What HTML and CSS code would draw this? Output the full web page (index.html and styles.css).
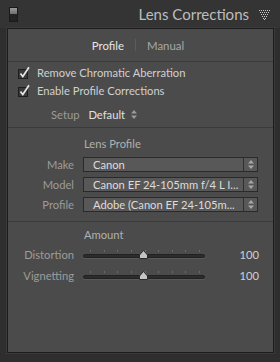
FILE: index.html
```html
<!DOCTYPE html>
<html lang="en">
<head>
    <meta charset="UTF-8">
    <meta name="viewport" content="width=device-width, initial-scale=1.0">
    <title>Lens Corrections</title>
    <link rel="stylesheet" href="styles.css">
</head>
<body>
    <div class="frame">
        <div class="header">
            <div class="toggle"><span class="toggle-on"></span></div>
            <h1 class="title">Lens Corrections</h1>
            <svg class="collapse" width="11" height="10" viewBox="0 0 11 10">
                <g fill="#c8c8c8">
                    <rect x="0" y="0" width="1" height="1"/><rect x="2" y="0" width="1" height="1"/><rect x="4" y="0" width="1" height="1"/><rect x="6" y="0" width="1" height="1"/><rect x="8" y="0" width="1" height="1"/><rect x="10" y="0" width="1" height="1"/>
                    <rect x="1" y="2" width="1" height="1"/><rect x="3" y="2" width="1" height="1"/><rect x="5" y="2" width="1" height="1"/><rect x="7" y="2" width="1" height="1"/><rect x="9" y="2" width="1" height="1"/>
                    <rect x="2" y="4" width="1" height="1"/><rect x="4" y="4" width="1" height="1"/><rect x="6" y="4" width="1" height="1"/><rect x="8" y="4" width="1" height="1"/>
                    <rect x="3" y="6" width="1" height="1"/><rect x="5" y="6" width="1" height="1"/><rect x="7" y="6" width="1" height="1"/>
                    <rect x="4" y="8" width="1" height="1"/><rect x="6" y="8" width="1" height="1"/>
                    <rect x="5" y="9" width="1" height="1"/>
                </g>
            </svg>
        </div>

        <div class="panel">
            <div class="tabs">
                <span class="tab active">Profile</span>
                <span class="tab-sep"></span>
                <span class="tab">Manual</span>
            </div>

            <div class="section checks">
                <label class="check">
                    <svg width="14" height="13" viewBox="0 0 14 13">
                        <rect x="0.5" y="3.5" width="9" height="9" fill="#3a3a3a" stroke="#1e1e1e"/>
                        <path d="M2.5 7.5 L4.8 10.5 L11 1.2" fill="none" stroke="#e6e6e6" stroke-width="1.7"/>
                    </svg>
                    <span>Remove Chromatic Aberration</span>
                </label>
                <label class="check">
                    <svg width="14" height="13" viewBox="0 0 14 13">
                        <rect x="0.5" y="3.5" width="9" height="9" fill="#3a3a3a" stroke="#1e1e1e"/>
                        <path d="M2.5 7.5 L4.8 10.5 L11 1.2" fill="none" stroke="#e6e6e6" stroke-width="1.7"/>
                    </svg>
                    <span>Enable Profile Corrections</span>
                </label>
                <div class="setup">
                    <span class="label">Setup</span>
                    <span class="value">Default</span>
                    <svg class="updown" width="6" height="9" viewBox="0 0 6 9">
                        <path d="M3 0 L6 3.5 H0 Z M3 9 L6 5.5 H0 Z" fill="#9a9a9a"/>
                    </svg>
                </div>
            </div>

            <div class="section profile">
                <div class="sub-title">Lens Profile</div>
                <div class="grid">
                    <span class="label">Make</span>
                    <div class="select"><span class="select-text">Canon</span><span class="select-btn"><svg width="6" height="9" viewBox="0 0 6 9"><path d="M3 0 L6 3.5 H0 Z M3 9 L6 5.5 H0 Z" fill="#a6a6a6"/></svg></span></div>
                    <span class="label">Model</span>
                    <div class="select"><span class="select-text">Canon EF 24-105mm f/4 L I...</span><span class="select-btn"><svg width="6" height="9" viewBox="0 0 6 9"><path d="M3 0 L6 3.5 H0 Z M3 9 L6 5.5 H0 Z" fill="#a6a6a6"/></svg></span></div>
                    <span class="label">Profile</span>
                    <div class="select"><span class="select-text">Adobe (Canon EF 24-105m...</span><span class="select-btn"><svg width="6" height="9" viewBox="0 0 6 9"><path d="M3 0 L6 3.5 H0 Z M3 9 L6 5.5 H0 Z" fill="#a6a6a6"/></svg></span></div>
                </div>
            </div>

            <div class="section amount">
                <div class="sub-title">Amount</div>
                <div class="grid sliders">
                    <span class="label">Distortion</span>
                    <div class="slider">
                        <div class="ticks"><i></i><i></i><i></i><i></i><i></i><i></i><i></i><i></i><i></i></div>
                        <div class="track"></div>
                        <svg class="thumb" width="9" height="9" viewBox="0 0 9 9"><path d="M4.5 0.5 L8.5 5 V8.5 H0.5 V5 Z" fill="#c4c4c4" stroke="#2a2a2a"/></svg>
                    </div>
                    <span class="num">100</span>
                    <span class="label">Vignetting</span>
                    <div class="slider">
                        <div class="ticks"><i></i><i></i><i></i><i></i><i></i><i></i><i></i><i></i><i></i></div>
                        <div class="track"></div>
                        <svg class="thumb" width="9" height="9" viewBox="0 0 9 9"><path d="M4.5 0.5 L8.5 5 V8.5 H0.5 V5 Z" fill="#c4c4c4" stroke="#2a2a2a"/></svg>
                    </div>
                    <span class="num">100</span>
                </div>
            </div>
        </div>
    </div>
</body>
</html>
```

FILE: styles.css
```css
* {
    margin: 0;
    padding: 0;
    box-sizing: border-box;
}

body {
    background-color: #2e2e2e;
    font-family: Lato, "Open Sans", sans-serif;
    font-size: 11.2px;
    color: #c8c8c8;
}

.frame {
    width: 280px;
    height: 362px;
    padding: 0 6px 9px 7px;
    display: flex;
    flex-direction: column;
}

/* Header */
.header {
    height: 28px;
    display: flex;
    align-items: center;
    background-color: #343434;
    margin: 0 -6px 0 -7px;
    padding: 0 10px 0 9px;
}

.toggle {
    width: 9px;
    height: 15px;
    background-color: #232323;
    border: 1px solid #1a1a1a;
    display: flex;
    flex-direction: column;
}

.toggle-on {
    height: 6px;
    background: linear-gradient(#9a9a9a, #6e6e6e);
}

.title {
    flex: 1;
    text-align: right;
    font-size: 15px;
    font-weight: normal;
    color: #bdbdbd;
    padding-right: 10px;
}

.collapse {
    margin-top: 1px;
}

/* Panel */
.panel {
    flex: 1;
    background-color: #4b4b4b;
    border: 1px solid #1c1c1c;
    box-shadow: 0 0 0 1px #3a3a3a;
}

.tabs {
    height: 33px;
    display: flex;
    align-items: center;
    justify-content: center;
    gap: 11px;
    padding-right: 5px;
    border-bottom: 1px solid #3b3b3b;
}

.tab {
    color: #a8a8a8;
    font-size: 11.4px;
}

.tab.active {
    color: #e6e6e6;
}

.tab-sep {
    width: 1px;
    height: 12px;
    background-color: #5c5c5c;
}

.section {
    border-bottom: 1px solid #3b3b3b;
}

.checks {
    padding: 1px 0 3px 10px;
}

.check {
    display: flex;
    align-items: center;
    gap: 5px;
    height: 18px;
    color: #d0d0d0;
}

.setup {
    display: flex;
    align-items: center;
    height: 25px;
    padding-top: 5px;
    padding-left: 33px;
}

.setup .label {
    color: #9c9c9c;
    margin-right: 9px;
}

.setup .value {
    color: #e0e0e0;
    margin-right: 6px;
}

.sub-title {
    color: #b0b0b0;
    padding-left: 76px;
    line-height: 16px;
}

.profile {
    padding: 8px 0 9px;
}

.grid {
    display: grid;
    grid-template-columns: 66px 175px;
    column-gap: 9px;
    row-gap: 5px;
    margin-top: 5px;
    align-items: center;
}

.label {
    text-align: right;
    color: #9c9c9c;
}

.select {
    height: 15px;
    display: flex;
    border: 1px solid #2a2a2a;
    background-color: #585858;
}

.select-text {
    flex: 1;
    padding-left: 9px;
    line-height: 13px;
    color: #dcdcdc;
    white-space: nowrap;
    overflow: hidden;
}

.select-btn {
    width: 14px;
    border-left: 1px solid #2f2f2f;
    display: flex;
    align-items: center;
    justify-content: center;
}

.amount {
    border-bottom: none;
    padding-top: 5px;
}

.sliders {
    grid-template-columns: 66px 122px 1fr;
    row-gap: 8px;
    margin-top: 5px;
}

.slider {
    position: relative;
    height: 13px;
    padding-top: 2px;
}

.ticks {
    display: flex;
    justify-content: space-between;
    padding: 0 5px 0 7px;
    margin-bottom: 2px;
}

.ticks i {
    width: 1px;
    height: 2px;
    background-color: #6a6a6a;
}

.track {
    height: 4px;
    background-color: #2c2c2c;
    border: 1px solid #222;
    border-radius: 2px;
    box-shadow: 0 1px 0 #5a5a5a;
}

.thumb {
    position: absolute;
    left: 56px;
    top: 2px;
}

.num {
    text-align: right;
    color: #d0d0d0;
    padding-right: 14px;
}
```
